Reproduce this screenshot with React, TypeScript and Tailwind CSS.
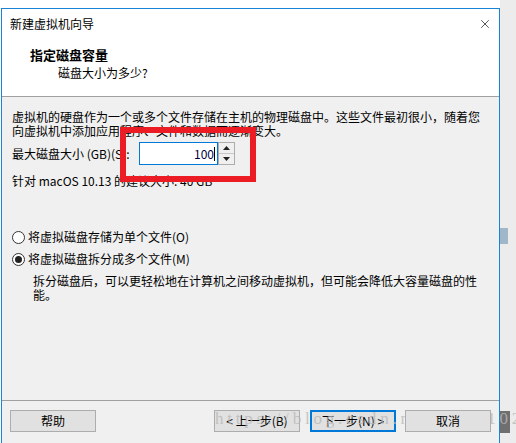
import { X } from 'lucide-react';

const FONT = { fontFamily: '"Noto Sans CJK SC", "Liberation Sans", sans-serif' };

function Radio({ checked }: { checked?: boolean }) {
  return (
    <span className="w-[13px] h-[13px] rounded-full border border-[#333] bg-white flex items-center justify-center shrink-0">
      {checked && <span className="w-[7px] h-[7px] rounded-full bg-[#222]" />}
    </span>
  );
}

function Btn({ label, primary, className = '' }: { label: string; primary?: boolean; className?: string }) {
  return (
    <button
      className={
        'h-[22px] w-[86px] bg-[#e1e1e1] text-[12px] leading-none text-black flex items-center justify-center ' +
        (primary ? 'border-2 border-[#0078d7] ' : 'border border-[#adadad] ') +
        className
      }
    >
      {label}
    </button>
  );
}

export default function App() {
  return (
    <div className="w-[516px] h-[443px] relative overflow-hidden bg-[#ececec] flex" style={FONT}>
      {/* Left: page strip + dialog */}
      <div className="w-[500px] bg-white pt-[8px] pl-[1px]">
        <div className="w-[499px] h-[435px] border-x border-t border-[#1883d7] flex flex-col bg-[#f0f0f0] text-black">
          {/* Header */}
          <div className="h-[87px] bg-white flex flex-col">
            <div className="h-[30px] flex items-center justify-between pl-[8px] pr-[7px]">
              <span className="text-[12px] leading-[14px]">新建虚拟机向导</span>
              <X size={14} strokeWidth={1.2} className="text-[#111]" />
            </div>
            <div className="mt-[9px] pl-[28px] text-[13px] leading-[14px] font-bold">指定磁盘容量</div>
            <div className="mt-[4px] pl-[56px] text-[12px] leading-[14px]">磁盘大小为多少?</div>
          </div>
          <div className="h-px bg-[#a0a0a0]" />

          {/* Body */}
          <div className="h-[303px] px-[10px] pt-[13px] text-[12px] leading-[14px]">
            <p>
              虚拟机的硬盘作为一个或多个文件存储在主机的物理磁盘中。这些文件最初很小，随着您
              <br />
              向虚拟机中添加应用程序、文件和数据而逐渐变大。
            </p>

            <div className="mt-[4px] h-[23px] flex items-center">
              <span className="w-[127px]">最大磁盘大小 (GB)(S):</span>
              <div className="w-[79px] h-[23px] border border-[#0078d7] bg-white flex items-center justify-end pr-[2px]">
                <span className="text-[#000040]">100</span>
                <span className="w-px h-[14px] bg-black" />
              </div>
              <div className="w-[17px] h-[23px] border border-[#adadad] bg-[#f0f0f0] flex flex-col">
                <div className="flex-1 flex items-center justify-center border-b border-[#c8c8c8]">
                  <svg width="7" height="4" viewBox="0 0 7 4"><path d="M0 4 L3.5 0 L7 4 Z" fill="#222" /></svg>
                </div>
                <div className="flex-1 flex items-center justify-center">
                  <svg width="7" height="4" viewBox="0 0 7 4"><path d="M0 0 L3.5 4 L7 0 Z" fill="#222" /></svg>
                </div>
              </div>
            </div>

            <p className="mt-[9px]">针对 macOS 10.13 的建议大小: 40 GB</p>

            <div className="mt-[41px] h-[16px] flex items-center gap-[3px]">
              <Radio />
              <span>将虚拟磁盘存储为单个文件(O)</span>
            </div>
            <div className="mt-[6px] h-[16px] flex items-center gap-[3px]">
              <Radio checked />
              <span>将虚拟磁盘拆分成多个文件(M)</span>
            </div>
            <p className="mt-[7px] ml-[21px]">
              拆分磁盘后，可以更轻松地在计算机之间移动虚拟机，但可能会降低大容量磁盘的性
              <br />
              能。
            </p>
          </div>

          {/* Footer */}
          <div className="h-px bg-[#a0a0a0]" />
          <div className="flex-1 flex items-start pt-[9px] pl-[8px] pr-[8px]">
            <Btn label="帮助" />
            <div className="flex-1" />
            <Btn label="< 上一步(B)" />
            <Btn label="下一步(N) >" primary className="ml-[10px]" />
            <Btn label="取消" className="ml-[9px] relative z-20" />
          </div>
        </div>
      </div>

      {/* Right: desktop behind the dialog */}
      <div className="flex-1 flex flex-col">
        <div className="h-[228px]" />
        <div className="h-[16px] w-[8px] bg-[#9fb7c9]" />
        <div className="flex-1" />
        <div className="h-[22px] w-[10px] bg-[#6f6f6f]" />
        <div className="h-[10px]" />
      </div>

      {/* Red highlight annotation */}
      <div className="absolute left-[120px] top-[127px] w-[136px] h-[55px] border-[6px] border-[#ec1c24]" />

      {/* Watermark */}
      <div
        className="absolute left-[215px] top-[410px] text-[17px] leading-[18px] tracking-[3.8px] text-[#b8b8b8]/80 z-10 whitespace-nowrap"
        style={{ fontFamily: '"Liberation Serif", serif' }}
      >
        https://blog.csdn.net/lilu 1024
      </div>
    </div>
  );
}
